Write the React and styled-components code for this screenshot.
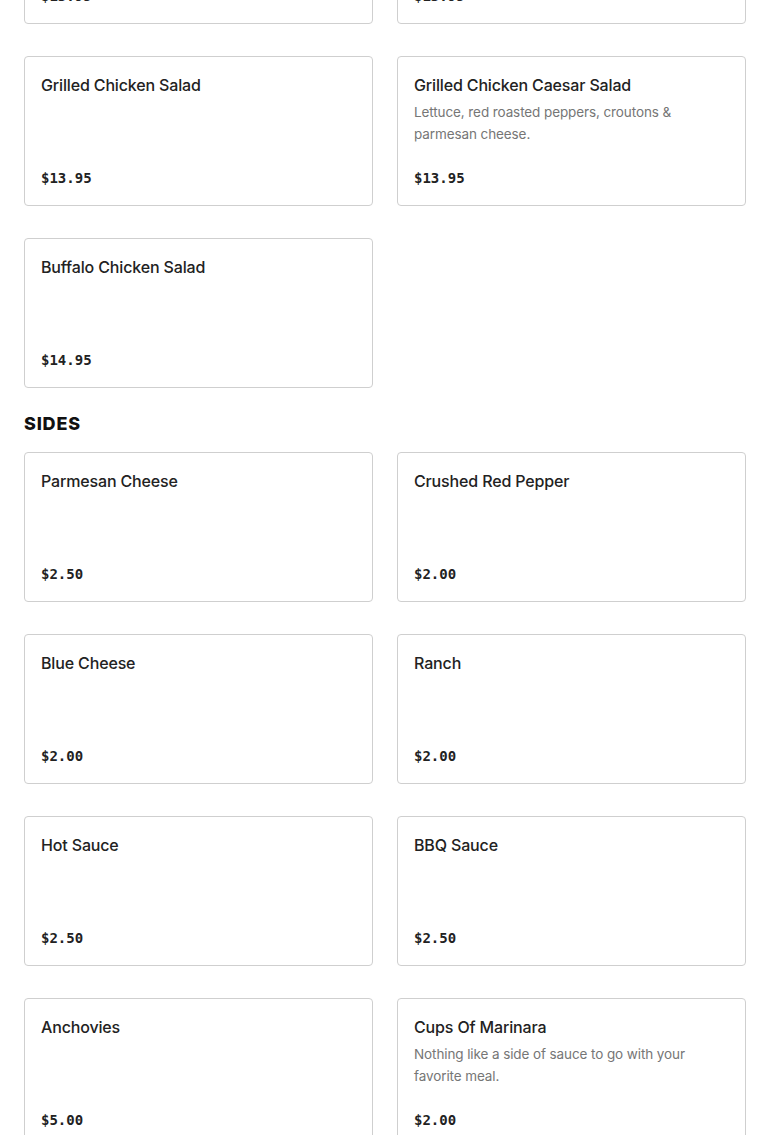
import React from 'react'
import styled, { createGlobalStyle } from 'styled-components'

const GlobalStyle = createGlobalStyle`
  body {
    margin: 0;
    background: #fff;
    font-family: Inter, "Liberation Sans", sans-serif;
    color: #222;
  }
`

const Page = styled.div`
  padding: 0 24px;
  margin-top: -126px;
`

const Grid = styled.div`
  display: grid;
  grid-template-columns: 1fr 1fr;
  column-gap: 24px;
  row-gap: 32px;
`

const SectionTitle = styled.h2`
  margin: 24px 0 16px;
  font-size: 18px;
  line-height: 24px;
  font-weight: 800;
  letter-spacing: 0.8px;
  color: #111;
`

const Card = styled.div`
  box-sizing: border-box;
  height: 150px;
  display: flex;
  flex-direction: column;
  padding: 16px 16px 15px;
  border: 1px solid #cfcfcf;
  border-radius: 4px;
`

const Name = styled.div`
  font-size: 16px;
  line-height: 24px;
  font-weight: 500;
  letter-spacing: -0.15px;
  color: #222;
`

const Desc = styled.div`
  margin-top: 4px;
  font-size: 13.5px;
  line-height: 22px;
  letter-spacing: -0.1px;
  color: #767676;
`

const Price = styled.div`
  margin-top: auto;
  font-family: "DejaVu Sans Mono", "Liberation Mono", monospace;
  font-weight: bold;
  font-size: 14px;
  line-height: 24px;
  color: #222;
`

const salads = [
  { name: 'Chef Salad', price: '$13.95' },
  { name: 'Greek Salad', price: '$13.95' },
  { name: 'Grilled Chicken Salad', price: '$13.95' },
  { name: 'Grilled Chicken Caesar Salad', desc: 'Lettuce, red roasted peppers, croutons & parmesan cheese.', price: '$13.95' },
  { name: 'Buffalo Chicken Salad', price: '$14.95' },
]

const sides = [
  { name: 'Parmesan Cheese', price: '$2.50' },
  { name: 'Crushed Red Pepper', price: '$2.00' },
  { name: 'Blue Cheese', price: '$2.00' },
  { name: 'Ranch', price: '$2.00' },
  { name: 'Hot Sauce', price: '$2.50' },
  { name: 'BBQ Sauce', price: '$2.50' },
  { name: 'Anchovies', price: '$5.00' },
  { name: 'Cups Of Marinara', desc: 'Nothing like a side of sauce to go with your favorite meal.', price: '$2.00' },
]

function ItemCard({ item }) {
  return (
    <Card>
      <Name>{item.name}</Name>
      {item.desc && <Desc>{item.desc}</Desc>}
      <Price>{item.price}</Price>
    </Card>
  )
}

export default function App() {
  return (
    <>
      <GlobalStyle />
      <Page>
        <Grid>
          {salads.map((item) => <ItemCard key={item.name} item={item} />)}
        </Grid>
        <SectionTitle>SIDES</SectionTitle>
        <Grid>
          {sides.map((item) => <ItemCard key={item.name} item={item} />)}
        </Grid>
      </Page>
    </>
  )
}
